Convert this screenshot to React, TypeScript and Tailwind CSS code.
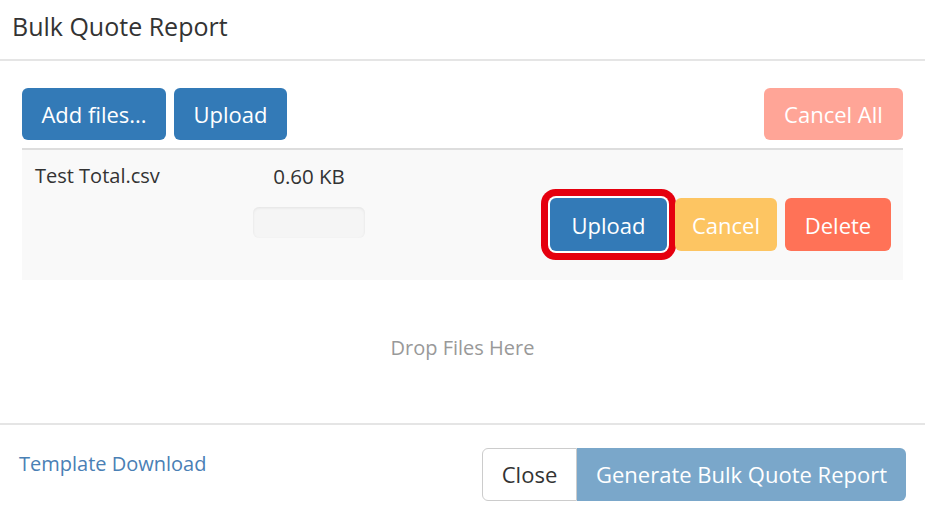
import React from "react";

export default function App() {
  const btn =
    "h-[52px] px-[12px] rounded-[6px] text-[22px] leading-[30px] text-white flex items-center justify-center whitespace-nowrap";
  return (
    <div className="w-[925px] h-[520px] bg-white font-['Open_Sans',sans-serif] text-[#333] overflow-hidden">
      <div className="h-[61px] border-b-2 border-[#e5e5e5] pl-[12px] pt-[10px]">
        <div className="text-[25px] leading-[32px]">Bulk Quote Report</div>
      </div>
      <div className="px-[22px] pt-[27px]">
        <div className="flex justify-between">
          <div className="flex gap-[8px]">
            <button className={`${btn} w-[144px] bg-[#337ab7]`}>Add files...</button>
            <button className={`${btn} w-[113px] bg-[#337ab7]`}>Upload</button>
          </div>
          <button className={`${btn} w-[139px] bg-[#ffa597]`}>Cancel All</button>
        </div>
        <div className="mt-[8px] border-t-2 border-[#dddddd] bg-[#f9f9f9] h-[132px] flex">
          <div className="w-[231px] pl-[13px] pt-[11px] text-[20px] leading-[30px]">Test Total.csv</div>
          <div className="w-[112px] pt-[11px] flex flex-col items-center">
            <div className="text-[20.5px] leading-[30px]">0.60 KB</div>
            <div className="mt-[16px] w-[112px] h-[31px] rounded-[6px] bg-[#f5f5f5] shadow-[inset_0_1px_3px_rgba(0,0,0,0.08)]" />
          </div>
          <div className="flex-1 flex justify-end items-start pt-[48px] pr-[12px] gap-[8px]">
            <button className={`${btn} h-[53px] w-[117px] bg-[#337ab7] shadow-[0_0_0_2px_#fff,0_0_0_9px_#e5000f]`}>Upload</button>
            <button className={`${btn} h-[53px] w-[102px] bg-[#fdc562]`}>Cancel</button>
            <button className={`${btn} h-[53px] w-[106px] bg-[#ff7257]`}>Delete</button>
          </div>
        </div>
        <div className="h-[143px] pb-[8px] flex items-center justify-center text-[20px] text-[#999]">Drop Files Here</div>
      </div>
      <div className="border-t-2 border-[#e5e5e5] pt-[23px] pl-[19px] pr-[19px] flex justify-between items-start">
        <a className="mt-[1px] text-[20px] leading-[30px] text-[#4a80b5]">Template Download</a>
        <div className="flex">
          <button className="h-[53px] w-[95px] rounded-l-[6px] border border-[#cccccc] bg-white text-[22px] text-[#333] flex items-center justify-center">Close</button>
          <button className="h-[53px] w-[329px] rounded-r-[6px] bg-[#7aa7ca] text-[22px] text-white flex items-center justify-center whitespace-nowrap">Generate Bulk Quote Report</button>
        </div>
      </div>
    </div>
  );
}
